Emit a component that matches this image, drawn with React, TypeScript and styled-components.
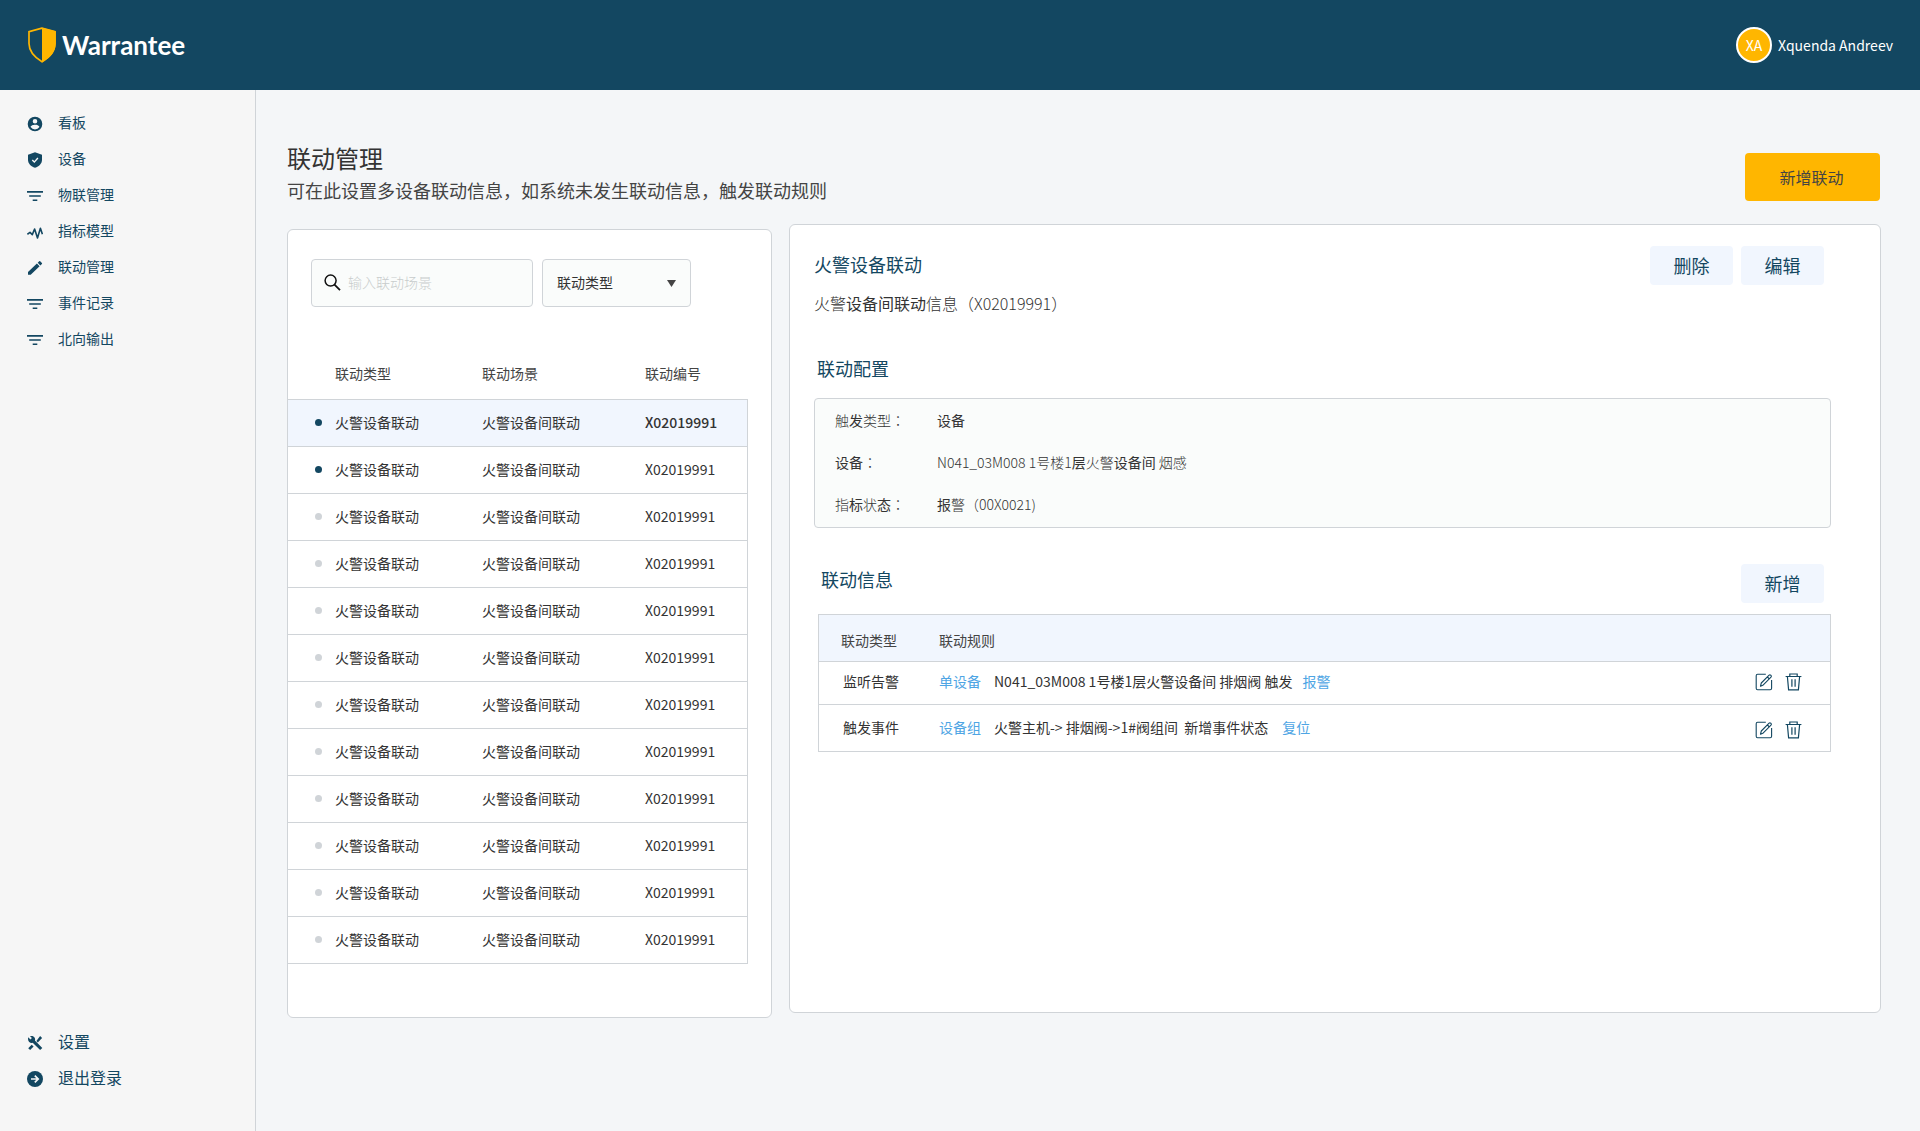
import React from 'react';
import styled, { createGlobalStyle } from 'styled-components';

const color = {
  navy: '#134761',
  amber: '#ffb600',
  line: '#d0d4d8',
  ink: '#333333',
  tint: '#f1f6fe',
  field: '#fafcfb',
  link: '#4ea5e4',
};

const GlobalStyle = createGlobalStyle`
  *, *::before, *::after { box-sizing: border-box; }
  body {
    margin: 0;
    background: #f4f6f8;
    color: ${color.ink};
    font-family: "Noto Sans CJK SC", "Noto Sans", sans-serif;
    font-size: 14px;
    line-height: 20px;
  }
  button, input, select { font: inherit; color: inherit; }
  h1, h2, h3, p, dl, dd, ul { margin: 0; padding: 0; font-weight: 400; }
`;

const Page = styled.div`
  display: flex;
  flex-direction: column;
  min-height: 100vh;
`;

const TopBar = styled.header`
  display: flex;
  align-items: center;
  justify-content: space-between;
  height: 90px;
  padding: 0 27px 0 28px;
  background: ${color.navy};
  color: #ffffff;
`;

const Brand = styled.a`
  display: flex;
  align-items: center;
  gap: 6px;
  color: inherit;
  text-decoration: none;
  font-family: Lato, sans-serif;
  font-size: 26px;
  line-height: 36px;
  font-weight: 700;
`;

const User = styled.div`
  display: flex;
  align-items: center;
  gap: 6px;
`;

const Avatar = styled.span`
  display: grid;
  place-items: center;
  width: 36px;
  height: 36px;
  border: 2px solid #ffffff;
  border-radius: 50%;
  background: ${color.amber};
`;

const Body = styled.div`
  display: grid;
  grid-template-columns: 256px minmax(0, 1fr);
  flex: 1;
`;

const Sidebar = styled.nav`
  display: flex;
  flex-direction: column;
  justify-content: space-between;
  padding: 14px 0 36px;
  border-right: 1px solid ${color.line};
  background: #f6f6f6;
`;

const NavList = styled.ul<{ $size: number }>`
  list-style: none;
  font-size: ${(p) => p.$size}px;
`;

const NavLink = styled.a`
  display: flex;
  align-items: center;
  gap: 15px;
  height: 36px;
  padding-left: 27px;
  color: ${color.navy};
  text-decoration: none;

  svg { margin-top: 4px; }
`;

const Main = styled.main`
  padding: 51px 39px 113px 31px;
`;

const PageHead = styled.div`
  display: flex;
  align-items: center;
  justify-content: space-between;
`;

const Title = styled.h1`
  font-size: 24px;
  line-height: 34px;
`;

const Subtitle = styled.p`
  font-size: 18px;
  line-height: 30px;
  color: #444444;
`;

const PrimaryButton = styled.button`
  width: 135px;
  height: 48px;
  margin: 8px 1px 0 0;
  padding: 0 2px 0 0;
  border: 0;
  border-radius: 4px;
  background: ${color.amber};
  color: #444444;
  font-size: 16px;
`;

const SoftButton = styled.button`
  width: 83px;
  height: 39px;
  padding: 0 0 2px;
  border: 0;
  border-radius: 4px;
  background: ${color.tint};
  color: ${color.navy};
  font-size: 18px;
`;

const Panels = styled.div`
  display: grid;
  grid-template-columns: 485px minmax(0, 1fr);
  gap: 17px;
  margin-top: 19px;
`;

const Panel = styled.section`
  border: 1px solid ${color.line};
  border-radius: 6px;
  background: #ffffff;
`;

const ListPanel = styled(Panel)`
  margin-top: 5px;
  padding-bottom: 53px;
`;

const DetailPanel = styled(Panel)`
  margin-bottom: 5px;
  padding: 21px 49px 24px 24px;
`;

const Filters = styled.div`
  display: flex;
  gap: 9px;
  padding: 29px 23px 43px;
`;

const SearchBox = styled.label`
  display: flex;
  align-items: center;
  gap: 7px;
  width: 222px;
  height: 48px;
  padding: 0 12px 2px;
  border: 1px solid ${color.line};
  border-radius: 4px;
  background: ${color.field};
`;

const SearchInput = styled.input`
  flex: 1;
  min-width: 0;
  padding: 0;
  border: 0;
  outline: 0;
  background: transparent;

  &::placeholder { color: #c8cccc; font-weight: 300; opacity: 1; }
`;

const SelectBox = styled.label`
  display: grid;
  align-items: center;
  width: 149px;
  height: 48px;

  & > * { grid-area: 1 / 1; }
  svg { justify-self: end; margin-right: 15px; pointer-events: none; }
`;

const Select = styled.select`
  width: 100%;
  height: 100%;
  padding: 0 14px 2px;
  appearance: none;
  border: 1px solid ${color.line};
  border-radius: 4px;
  background: ${color.field};
`;

const SceneTable = styled.table`
  width: 460px;
  table-layout: fixed;
  border-collapse: separate;
  border-spacing: 0;

  th, td {
    padding: 0 0 2px;
    border-bottom: 1px solid ${color.line};
    text-align: left;
    font-weight: 400;
    white-space: nowrap;
  }
  th { height: 50px; padding-bottom: 4px; color: #444444; }
  td { height: 47px; }
  td:last-child { border-right: 1px solid ${color.line}; }
`;

const SceneRow = styled.tr<{ $selected: boolean }>`
  background: ${(p) => (p.$selected ? color.tint : 'transparent')};

  td:last-child { font-weight: ${(p) => (p.$selected ? 500 : 400)}; }
`;

const Dot = styled.span<{ $on: boolean }>`
  display: block;
  width: 7px;
  height: 7px;
  margin-left: 27px;
  border-radius: 50%;
  background: ${(p) => (p.$on ? color.navy : color.line)};
`;

const DetailHead = styled.div`
  display: flex;
  align-items: flex-start;
  justify-content: space-between;
`;

const DetailTitle = styled.h2`
  padding-top: 4px;
  font-size: 18px;
  line-height: 28px;
  color: ${color.navy};
`;

const DetailNote = styled.p`
  margin-top: 13px;
  font-size: 16px;
  line-height: 24px;
`;

const Actions = styled.div`
  display: flex;
  gap: 8px;
  padding-right: 7px;
`;

const Thin = styled.span`
  font-weight: 300;
`;

const ConfigSection = styled.section`
  margin-top: 38px;
`;

const InfoSection = styled.section`
  margin: 36px 0 0 4px;
`;

const SectionHead = styled.div`
  display: flex;
  align-items: flex-start;
  justify-content: space-between;
  padding-left: 3px;
`;

const SectionTitle = styled.h3`
  font-size: 18px;
  line-height: 30px;
  color: ${color.navy};
`;

const Config = styled.dl`
  display: grid;
  grid-template-columns: 102px minmax(0, 1fr);
  margin-top: 15px;
  padding: 0 20px 2px;
  border: 1px solid ${color.line};
  border-radius: 4px;
  background: ${color.field};
  line-height: 42px;
`;

const Colon = styled.span`
  font-family: "Noto Sans CJK TC", sans-serif;
  font-weight: 300;
`;

const RuleTable = styled.table`
  width: 100%;
  margin-top: 11px;
  border: 1px solid ${color.line};
  border-collapse: separate;
  border-spacing: 0;

  th {
    height: 47px;
    padding: 4px 0 0;
    border-bottom: 1px solid ${color.line};
    background: ${color.tint};
    color: #444444;
    text-align: left;
    font-weight: 400;
  }
  th:first-child { width: 120px; padding-left: 22px; }
  td { height: 46px; padding: 0 0 3px; }
  td:first-child { padding-left: 24px; }
  tbody tr:first-child td {
    height: 43px;
    padding-bottom: 5px;
    border-bottom: 1px solid ${color.line};
  }
  tbody tr td:last-child { width: 100px; padding: 4px 28px 0 0; }
  tbody tr:first-child td:last-child { padding: 0 28px 2px 0; }
`;

const Rule = styled.div`
  display: flex;
  white-space: pre;
`;

const RuleLink = styled.a`
  color: ${color.link};
  text-decoration: none;
`;

const RuleText = styled.span<{ $end: number }>`
  margin: 0 ${(p) => p.$end}px 0 13px;
`;

const IconRow = styled.div`
  display: flex;
  justify-content: flex-end;
  gap: 12px;
`;

const IconButton = styled.button`
  display: block;
  padding: 0;
  border: 0;
  background: transparent;
  color: ${color.navy};

  svg { display: block; }
`;

const Glyph = ({ children }: { children: React.ReactNode }) => (
  <svg width="16" height="16" viewBox="0 0 16 16" fill="currentColor" aria-hidden="true">
    {children}
  </svg>
);

const FilterIcon = () => (
  <Glyph>
    <path d="M0 3h16v1.700H0zM2.200 7.200h11.600v1.600H2.200zM5.700 11.500h4.600v1.500H5.700z" />
  </Glyph>
);
const AccountIcon = () => (
  <Glyph>
    <path
      fillRule="evenodd"
      d="M8 .7a7.300 7.300 0 1 0 0 14.600A7.300 7.300 0 0 0 8 .7zm0 2.200a2.300 2.300 0 1 1 0 4.600 2.300 2.300 0 0 1 0-4.600zm0 10.500a5.300 5.300 0 0 1-4.400-2.400c0-1.500 2.900-2.300 4.400-2.300s4.400.8 4.400 2.300A5.300 5.300 0 0 1 8 13.400z"
    />
  </Glyph>
);
const ShieldCheckIcon = () => (
  <Glyph>
    <path d="M8 .2 1 2.800v5c0 3.700 2.900 6.700 7 8 4.100-1.300 7-4.300 7-8v-5z" />
    <path d="m5.300 8.100 2 2L10.900 6" fill="none" stroke="#f6f6f6" strokeWidth="1.400" />
  </Glyph>
);
const PulseIcon = () => (
  <Glyph>
    <path
      d="M.4 10.300 3 8.400l2.300 2.200L7.600 5l2.900 9L13.400 4.200l2 6"
      fill="none"
      stroke="currentColor"
      strokeWidth="1.600"
      strokeLinejoin="round"
    />
  </Glyph>
);
const PencilIcon = () => (
  <Glyph>
    <path d="M1 14.800v-2.700l8.900-8.600 2.700 2.700-8.900 8.600zM10.700 2.700l1.500-1.400q.5-.5 1 0l1.700 1.700q.5.500 0 1l-1.500 1.400z" />
  </Glyph>
);
const ToolsIcon = () => (
  <Glyph>
    <path d="M1.300 2.300 3.400 4.400l1.500-1.300L3 1.200c1.600-.5 3.300-.2 4.300 1 .9 1 1 2.300.6 3.400l7.400 7.300-2.200 2.200L5.700 7.800c-1.100.5-2.500.2-3.500-.7-1.100-1.200-1.500-3.200-.9-4.800z" />
    <path d="m1.200 13.300 3.500-3.500 1.900 1.800L3.100 15zM9.400 6 13.100 1l2 1.900-4.300 4.500z" />
  </Glyph>
);
const ExitIcon = () => (
  <Glyph>
    <circle cx="8" cy="8" r="8" />
    <path d="M4 8h6.800M7.800 4.700 11.200 8l-3.400 3.300" fill="none" stroke="#f6f6f6" strokeWidth="1.700" />
  </Glyph>
);
const Shield = () => (
  <svg width="28" height="36" viewBox="0 0 28 36" aria-hidden="true">
    <path d="M14 1.100 1 4.600v11.800c0 8.200 5.500 13.700 13 18.300 7.500-4.600 13-10.100 13-18.300V4.600z" fill="none" stroke={color.amber} strokeWidth="1.700" />
    <path d="M14 .7 27.800 4.200v12.200c0 8.400-5.800 14.300-13.800 19z" fill={color.amber} />
  </svg>
);
const SearchIcon = () => (
  <svg width="17" height="17" viewBox="0 0 17 17" fill="none" stroke="#111111" strokeWidth="1.500" aria-hidden="true">
    <circle cx="6.600" cy="6.600" r="5.500" />
    <path d="m10.500 10.600 5.500 5.500" strokeWidth="1.800" />
  </svg>
);
const EditIcon = () => (
  <svg width="18" height="18" viewBox="0 0 18 18" fill="none" stroke="currentColor" strokeWidth="1.100" strokeLinejoin="round" aria-hidden="true">
    <path d="M10.800 1.300H2.600Q1.200 1.300 1.200 2.700v12.600q0 1.400 1.400 1.400h12.600q1.400 0 1.400-1.400V7" />
    <path d="m5.500 13.200.8-3.200 7.800-7.800q.8-.8 1.600 0l.3.300q.8.800 0 1.600l-7.700 7.800zM12.400 4l2 2" />
  </svg>
);
const TrashIcon = () => (
  <svg width="17" height="18" viewBox="0 0 17 18" fill="none" stroke="currentColor" strokeWidth="1.200" aria-hidden="true">
    <path d="M.6 3.500h15.800M4.800 3.300V1h7.400v2.300M2.400 3.700l1.200 13.200h9.800l1.200-13.200M6.900 6.200v7.600M10.100 6.200v7.600" />
  </svg>
);

const primaryNav = [
  { label: '看板', Icon: AccountIcon },
  { label: '设备', Icon: ShieldCheckIcon },
  { label: '物联管理', Icon: FilterIcon },
  { label: '指标模型', Icon: PulseIcon },
  { label: '联动管理', Icon: PencilIcon },
  { label: '事件记录', Icon: FilterIcon },
  { label: '北向输出', Icon: FilterIcon },
];
const secondaryNav = [
  { label: '设置', Icon: ToolsIcon },
  { label: '退出登录', Icon: ExitIcon },
];

const scenes = Array.from({ length: 12 }, (_, i) => ({
  type: '火警设备联动',
  scene: '火警设备间联动',
  code: 'X02019991',
  active: i < 2,
}));

const rules = [
  { kind: '监听告警', target: '单设备', text: 'N041_03M008 1号楼1层火警设备间 排烟阀 触发', result: '报警', end: 10 },
  { kind: '触发事件', target: '设备组', text: '火警主机-> 排烟阀->1#阀组间  新增事件状态', result: '复位', end: 14 },
];

const Nav = ({ items, size }: { items: typeof primaryNav; size: number }) => (
  <NavList $size={size}>
    {items.map(({ label, Icon }) => (
      <li key={label}>
        <NavLink href="#">
          <Icon />
          {label}
        </NavLink>
      </li>
    ))}
  </NavList>
);

export default function App() {
  return (
    <Page>
      <GlobalStyle />
      <TopBar>
        <Brand href="#">
          <Shield />
          Warrantee
        </Brand>
        <User>
          <Avatar>XA</Avatar>
          Xquenda Andreev
        </User>
      </TopBar>
      <Body>
        <Sidebar>
          <Nav items={primaryNav} size={14} />
          <Nav items={secondaryNav} size={16} />
        </Sidebar>
        <Main>
          <PageHead>
            <div>
              <Title>联动管理</Title>
              <Subtitle>可在此设置多设备联动信息，如系统未发生联动信息，触发联动规则</Subtitle>
            </div>
            <PrimaryButton type="button">新增联动</PrimaryButton>
          </PageHead>
          <Panels>
            <ListPanel>
              <Filters>
                <SearchBox>
                  <SearchIcon />
                  <SearchInput type="text" aria-label="输入联动场景" placeholder="输入联动场景" />
                </SearchBox>
                <SelectBox>
                  <Select aria-label="联动类型">
                    <option>联动类型</option>
                  </Select>
                  <svg width="9" height="7" viewBox="0 0 9 7" aria-hidden="true">
                    <path d="M0 0h9L4.500 7z" fill="#444444" />
                  </svg>
                </SelectBox>
              </Filters>
              <SceneTable>
                <colgroup>
                  <col width="47" />
                  <col width="147" />
                  <col width="163" />
                  <col />
                </colgroup>
                <thead>
                  <tr>
                    <th />
                    <th>联动类型</th>
                    <th>联动场景</th>
                    <th>联动编号</th>
                  </tr>
                </thead>
                <tbody>
                  {scenes.map((row, i) => (
                    <SceneRow key={i} $selected={i === 0}>
                      <td><Dot $on={row.active} /></td>
                      <td>{row.type}</td>
                      <td>{row.scene}</td>
                      <td>{row.code}</td>
                    </SceneRow>
                  ))}
                </tbody>
              </SceneTable>
            </ListPanel>
            <DetailPanel>
              <DetailHead>
                <div>
                  <DetailTitle>火警设备联动</DetailTitle>
                  <DetailNote>
                    <Thin>火警</Thin>设备间联动<Thin>信息（X02019991）</Thin>
                  </DetailNote>
                </div>
                <Actions>
                  <SoftButton type="button">删除</SoftButton>
                  <SoftButton type="button">编辑</SoftButton>
                </Actions>
              </DetailHead>
              <ConfigSection>
                <SectionHead>
                  <SectionTitle>联动配置</SectionTitle>
                </SectionHead>
                <Config>
                  <dt><Thin>触</Thin>发<Thin>类型</Thin><Colon>：</Colon></dt>
                  <dd>设备</dd>
                  <dt>设备<Colon>：</Colon></dt>
                  <dd>
                    <Thin>N041_03M008 1号楼1</Thin>层<Thin>火警</Thin>设备间<Thin> 烟感</Thin>
                  </dd>
                  <dt><Thin>指</Thin>标<Thin>状</Thin>态<Colon>：</Colon></dt>
                  <dd>报<Thin>警（00X0021)</Thin></dd>
                </Config>
              </ConfigSection>
              <InfoSection>
                <SectionHead>
                  <SectionTitle>联动信息</SectionTitle>
                  <Actions>
                    <SoftButton type="button">新增</SoftButton>
                  </Actions>
                </SectionHead>
                <RuleTable>
                  <thead>
                    <tr>
                      <th>联动类型</th>
                      <th>联动规则</th>
                      <th />
                    </tr>
                  </thead>
                  <tbody>
                    {rules.map((rule) => (
                      <tr key={rule.kind}>
                        <td>{rule.kind}</td>
                        <td>
                          <Rule>
                            <RuleLink href="#">{rule.target}</RuleLink>
                            <RuleText $end={rule.end}>{rule.text}</RuleText>
                            <RuleLink href="#">{rule.result}</RuleLink>
                          </Rule>
                        </td>
                        <td>
                          <IconRow>
                            <IconButton type="button" aria-label="编辑"><EditIcon /></IconButton>
                            <IconButton type="button" aria-label="删除"><TrashIcon /></IconButton>
                          </IconRow>
                        </td>
                      </tr>
                    ))}
                  </tbody>
                </RuleTable>
              </InfoSection>
            </DetailPanel>
          </Panels>
        </Main>
      </Body>
    </Page>
  );
}
